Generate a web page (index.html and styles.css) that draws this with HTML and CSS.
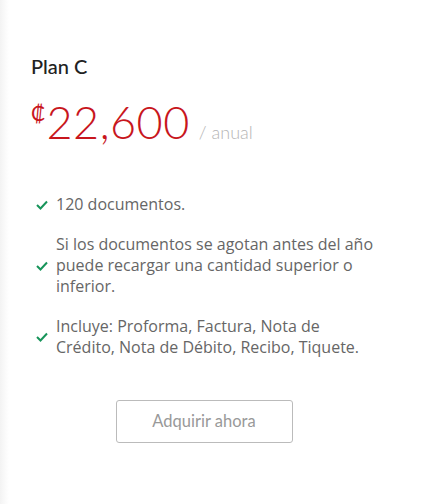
FILE: index.html
```html
<!DOCTYPE html>
<html>
<head>
  <meta charset="utf-8">
  <title>Plan C</title>
  <link rel="stylesheet" href="styles.css">
</head>
<body>
  <div class="card">
    <h2 class="plan-name">Plan C</h2>
    <div class="price">
      <span class="currency">₡</span><span class="amount">22,600</span>
      <span class="period">/ anual</span>
    </div>
    <ul class="features">
      <li>
        <svg class="check" viewBox="0 0 12 10" width="12" height="10"><path d="M1 5 L4.5 8.5 L11 1.5" fill="none" stroke="#17945a" stroke-width="2"/></svg>
        <span>120 documentos.</span>
      </li>
      <li>
        <svg class="check" viewBox="0 0 12 10" width="12" height="10"><path d="M1 5 L4.5 8.5 L11 1.5" fill="none" stroke="#17945a" stroke-width="2"/></svg>
        <span>Si los documentos se agotan antes del año puede recargar una cantidad superior o inferior.</span>
      </li>
      <li>
        <svg class="check" viewBox="0 0 12 10" width="12" height="10"><path d="M1 5 L4.5 8.5 L11 1.5" fill="none" stroke="#17945a" stroke-width="2"/></svg>
        <span>Incluye: Proforma, Factura, Nota de Crédito, Nota de Débito, Recibo, Tiquete.</span>
      </li>
    </ul>
    <div class="actions">
      <a class="buy" href="#">Adquirir ahora</a>
    </div>
  </div>
</body>
</html>
```

FILE: styles.css
```css
html, body {
  margin: 0;
  padding: 0;
  background: #fff;
}
body {
  min-height: 504px;
  background: linear-gradient(to right, #f3f3f3 0px, #fafafa 5px, #fff 9px);
}
.card {
  width: 346px;
  padding: 52px 31px 0 31px;
}
.plan-name {
  font-family: Lato, "Open Sans", sans-serif;
  font-weight: 500;
  font-size: 20px;
  line-height: 28px;
  color: #222;
  margin: 0;
}
.price {
  margin-top: 18px;
  font-family: Lato, "Open Sans", sans-serif;
  font-weight: 300;
  color: #c8161d;
  display: flex;
  align-items: baseline;
  line-height: 48px;
}
.currency {
  font-size: 21px;
  font-weight: 400;
  align-self: flex-start;
  line-height: 30px;
  margin-right: 1px;
}
.amount {
  font-size: 45px;
  letter-spacing: 0.5px;
}
.period {
  font-size: 18px;
  color: #b5b5b5;
  margin-left: 9px;
}
.features {
  list-style: none;
  margin: 38px 0 0 0;
  padding: 0;
  font-family: "Open Sans", sans-serif;
  font-size: 16px;
  line-height: 21px;
  color: #666;
}
.features li {
  display: flex;
  align-items: center;
  margin-bottom: 19px;
}
.check {
  flex: none;
  margin: 0 8px 0 5px;
}
.actions {
  display: flex;
  justify-content: center;
  margin-top: 42px;
}
.buy {
  display: block;
  width: 175px;
  height: 41px;
  line-height: 41px;
  text-align: center;
  border: 1px solid #bbb;
  border-radius: 3px;
  font-family: Lato, "Open Sans", sans-serif;
  font-size: 16.5px;
  color: #999;
  text-decoration: none;
}
```
